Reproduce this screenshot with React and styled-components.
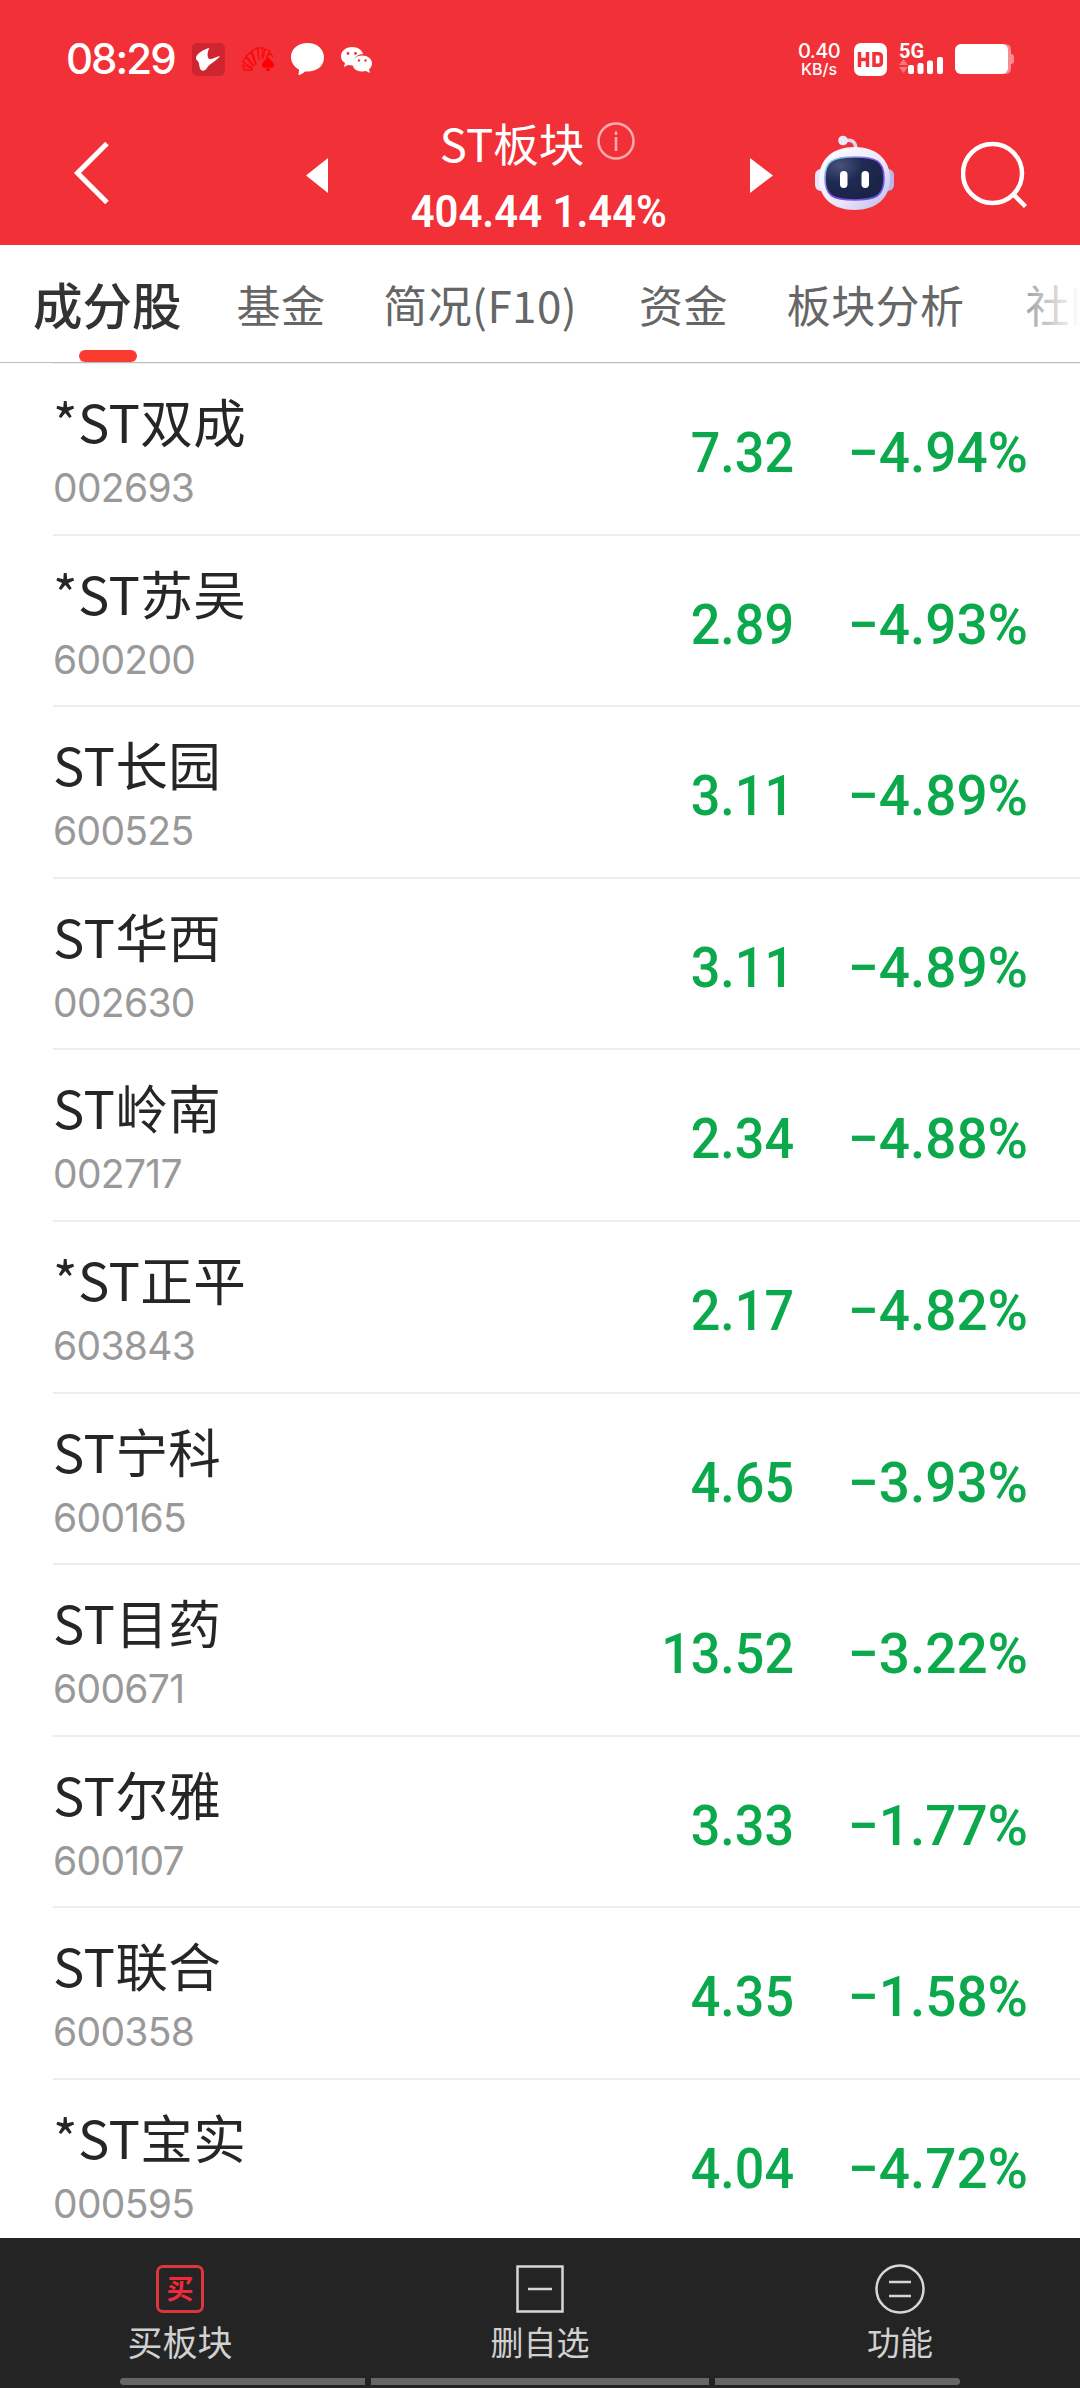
import React from 'react';
import styled, { createGlobalStyle } from 'styled-components';

const GlobalStyle = createGlobalStyle`
  * { box-sizing: border-box; }
  body {
    margin: 0;
    background-color: #fff;
    font-family: 'Noto Sans CJK SC', 'Noto Sans', sans-serif;
  }
  p { margin: 0; }
  svg { display: block; flex-shrink: 0; }
`
const Screen = styled.div`
  display: flex;
  flex-direction: column;
  width: 1080px;
  height: 2388px;
  overflow: hidden;
  background-color: #fff;
`
const Header = styled.header`
  height: 245px;
  color: #fff;
  background-color: #f23038;
`

/* status bar */
const StatusBar = styled.div`
  display: flex;
  align-items: center;
  justify-content: space-between;
  height: 118px;
  padding: 0 66px;
`
const StatusLeft = styled.div`
  display: flex;
  align-items: center;
`
const Clock = styled.span`
  width: 126px;
  font-family: Inter, sans-serif;
  font-size: 42px;
  font-weight: 450;
  line-height: 50px;
  letter-spacing: -2px;
`
const AppIcons = styled.div`
  display: flex;
  align-items: center;
  gap: 17px;
`
const StatusRight = styled.div`
  display: flex;
  align-items: center;
`
const Speed = styled.div`
  display: flex;
  flex-direction: column;
  align-items: center;
  width: 42px;
  margin-top: 2px;
  margin-right: 14px;
  font-family: Inter, sans-serif;
  font-weight: 500;
  font-size: 20px;
  line-height: 18px;
  letter-spacing: -0.6px;
  > small {
    font-size: 16px;
    letter-spacing: 0;
  }
`
const HdBadge = styled.div`
  display: flex;
  align-items: center;
  justify-content: center;
  width: 33px;
  height: 33px;
  margin-right: 12px;
  border-radius: 7px;
  background-color: #fff;
`
const Signal = styled.div`
  width: 45px;
  height: 32px;
  margin-right: 11px;
  font-family: Roboto, sans-serif;
  font-weight: 700;
  font-size: 20px;
  line-height: 16px;
  > svg { margin-top: -3px; }
`

/* title bar */
const TitleBar = styled.div`
  display: flex;
  height: 127px;
`
const BackButton = styled.div`
  width: 306px;
  padding: 23px 0 0 73px;
`
const Arrow = styled.div`
  width: ${({width}) => width}px;
  padding-top: 40px;
`
const TitleArea = styled.div`
  display: flex;
  flex-direction: column;
  align-items: center;
  width: 422px;
`
const Title = styled.div`
  display: flex;
  align-items: center;
  gap: 13px;
  height: 52px;
  margin: -2px 0 0 -3px;
  font-size: 45.5px;
  line-height: 54px;
  > svg { margin-top: -2px; }
`
const IndexValue = styled.div`
  margin-top: 19px;
  font-family: Roboto, sans-serif;
  font-weight: 600;
  font-size: 45px;
  line-height: 50px;
  white-space: pre;
  transform: scaleX(0.93);
`
const RobotButton = styled.div`
  width: 146px;
  padding-top: 17px;
`
const SearchButton = styled.div`
  padding-top: 23px;
`

/* tabs */
const Tabs = styled.nav`
  position: relative;
  display: flex;
  height: 118px;
  padding-left: 33px;
  overflow: hidden;
  border-bottom: 1px solid #bdbdbd;

  &::after {
    content: '';
    position: absolute;
    top: 0; right: 0; bottom: 0;
    width: 90px;
    background: linear-gradient(to right, rgba(255,255,255,0), #fff);
  }
`
const Tab = styled.div`
  display: flex;
  flex-direction: column;
  align-items: center;
  flex-shrink: 0;
  margin-right: ${({gap}) => gap}px;
  padding-top: ${({active}) => active ? 6 : 7}px;
  color: ${({active}) => active ? '#333' : '#666'};
  font-size: ${({active}) => active ? 49.5 : 44}px;
  font-weight: ${({active}) => active ? 500 : 400};
  line-height: 105px;
  letter-spacing: ${({active}) => active ? 0 : 0.4}px;
  white-space: nowrap;
`
const Indicator = styled.div`
  width: 58px;
  height: 12px;
  margin: -6px 0 0 2px;
  border-radius: 6px;
  background-color: #fb3b30;
`

/* stock list */
const List = styled.div`
  height: 1875px;
  padding-left: 53px;
  overflow: hidden;
`
const Rows = styled.div`
  border-top: 1px solid #ececec;
`
const Row = styled.div`
  display: flex;
  height: 171.6px;
  padding-right: 52px;
  border-bottom: 2px solid #ededed;
`
const Stock = styled.div`
  flex: 1;
  padding-top: 26px;
`
const Name = styled.p`
  color: #262626;
  font-size: 52.5px;
  line-height: 60px;
  letter-spacing: 0.4px;
`
const Code = styled.p`
  margin-top: 16px;
  color: #999;
  font-family: Inter, sans-serif;
  font-weight: 400;
  font-size: 39px;
  line-height: 44px;
  letter-spacing: -0.7px;
`
const Num = styled.div`
  width: ${({width}) => width}px;
  color: #0ca94c;
  font-family: Roboto, sans-serif;
  font-weight: 500;
  font-size: 56px;
  line-height: 178px;
  text-align: right;
  white-space: nowrap;
  transform: scaleX(${({stretch}) => stretch});
  transform-origin: right center;
`

/* bottom bar */
const BottomBar = styled.footer`
  height: 150px;
  padding-top: 26px;
  background-color: #242424;
`
const Actions = styled.div`
  display: grid;
  grid-template-columns: repeat(3, 1fr);
  height: 114px;
`
const Action = styled.div`
  display: flex;
  flex-direction: column;
  align-items: center;
  color: #d0d0d0;
  font-size: ${({size}) => size}px;
  line-height: 40px;
  > p { margin-top: 7px; }
`
const BuyIcon = styled.div`
  display: flex;
  align-items: center;
  justify-content: center;
  width: 48px;
  height: 48px;
  margin: 1px 0;
  border: 3px solid #dc363c;
  border-radius: 7px;
  color: #f02a3a;
  font-size: 27px;
  font-weight: 700;
  line-height: 27px;
  > span { margin-top: -3px; }
`
const ScrollBars = styled.div`
  display: grid;
  grid-template-columns: 245px 338px 245px;
  gap: 6px;
  justify-content: center;
`
const ScrollBar = styled.div`
  height: 7px;
  background-color: #666;
  &:first-child { border-radius: 4px 0 0 4px; }
  &:last-child { border-radius: 0 4px 4px 0; }
`

const stocks = [
  { name: '*ST双成', code: '002693', price: '7.32', rate: '−4.94%' },
  { name: '*ST苏吴', code: '600200', price: '2.89', rate: '−4.93%' },
  { name: 'ST长园', code: '600525', price: '3.11', rate: '−4.89%' },
  { name: 'ST华西', code: '002630', price: '3.11', rate: '−4.89%' },
  { name: 'ST岭南', code: '002717', price: '2.34', rate: '−4.88%' },
  { name: '*ST正平', code: '603843', price: '2.17', rate: '−4.82%' },
  { name: 'ST宁科', code: '600165', price: '4.65', rate: '−3.93%' },
  { name: 'ST目药', code: '600671', price: '13.52', rate: '−3.22%' },
  { name: 'ST尔雅', code: '600107', price: '3.33', rate: '−1.77%' },
  { name: 'ST联合', code: '600358', price: '4.35', rate: '−1.58%' },
  { name: '*ST宝实', code: '000595', price: '4.04', rate: '−4.72%' },
]

const tabs = [
  { label: '成分股', gap: 55 },
  { label: '基金', gap: 58 },
  { label: '简况(F10)', gap: 62 },
  { label: '资金', gap: 59 },
  { label: '板块分析', gap: 61 },
  { label: '社区', gap: 0 },
]

function BirdIcon() {
  return (
    <svg width="33" height="33" viewBox="0 0 33 33">
      <rect width="33" height="33" rx="5" fill="#cf2530" />
      <path d="M17.500 5C12 6 4 11 4 15c0 2 1.500 2.500 2.500 4 1 2 .5 5 2 7.500 2 2 4.500 1.500 6.500-1.500 2-4 10-7.500 13-12-4 1-8 3.500-10.500 3-2.500-1-2.500-7 0-11z" fill="#fff" />
    </svg>
  )
}

function CardsIcon() {
  return (
    <svg width="32" height="26" viewBox="0 0 32 26" fill="none" stroke="#ff0000" strokeWidth="1.3">
      <path d="M11 24H2l-1-5 10 4M10 22L1 16l3-5 8 10M12 20L4 10l5-4 5 13M14 18L10 5l5-3 2 12M17 14L16 2h5l-1 11M21 12l2-9 5 2-4 7M25 11l3-4 3 4" opacity="0.8" />
      <path d="M26 11c-2 3-6 5-6 8 0 3 3 4 5 2l-1 4h4l-1-4c2 2 5 1 5-2 0-3-4-5-6-8z" fill="#ff0000" stroke="none" />
    </svg>
  )
}

function ChatIcon() {
  return (
    <svg width="33" height="33" viewBox="0 0 33 33" fill="#fff">
      <path d="M16.500 0C7 0 0 6 0 14c0 5 3 10 8 12.500L7.500 32c2 0 5-2 6.500-3.500 11 1 19-5 19-14C33 6 26 0 16.500 0z" />
    </svg>
  )
}

function WechatIcon() {
  return (
    <svg width="32" height="27" viewBox="0 0 32 27">
      <path d="M11 1C5 1 0 5 0 10c0 3 1 5 4 7l-1 4 4-2 5 .5C12 12 16 8 22 8 21 4 17 1 11 1z" fill="#fff" />
      <path d="M21 9.500c-5 0-9.500 3-9.500 8s4 8 9.500 8l4-.5 4 2-1-3.500c2-2 3-4 3-6 0-5-4.500-8-10-8z" fill="#fff" />
      <circle cx="7" cy="7.500" r="1.400" fill="#f23038" />
      <circle cx="14.500" cy="7.500" r="1.400" fill="#f23038" />
      <circle cx="18" cy="14.500" r="1.200" fill="#f23038" />
      <circle cx="24.500" cy="14.500" r="1.200" fill="#f23038" />
    </svg>
  )
}

function HdIcon() {
  return (
    <svg width="27" height="17" viewBox="0 0 27 17" fill="none" stroke="#f23038" strokeWidth="3.5">
      <path d="M2.500 1v15M10.500 1v15M2.500 8.500h8" />
      <path d="M17 2.700h4.500q2.800 0 2.800 2.800v6q0 2.800-2.800 2.800H17z" />
    </svg>
  )
}

function SignalBars() {
  return (
    <svg width="45" height="19" viewBox="0 0 45 19">
      <path d="M0 9l4.500-6L9 9zM0 11h9l-4.500 6z" fill="#fff" opacity="0.35" />
      <rect x="9" y="9" width="6" height="9" rx="2" fill="#fff" />
      <rect x="18.500" y="7" width="6" height="11" rx="2" fill="#fff" />
      <rect x="28" y="4.500" width="6" height="13.500" rx="2" fill="#fff" />
      <rect x="38" y="1" width="6" height="17" rx="2" fill="#fff" />
    </svg>
  )
}

function BatteryIcon() {
  return (
    <svg width="59" height="30" viewBox="0 0 59 30">
      <path d="M46 0h4q6 0 6 6v4q3 0 3 3v4q0 3-3 3v4q0 6-6 6h-4z" fill="#fff" opacity="0.45" />
      <rect width="53" height="30" rx="6" fill="#fff" />
    </svg>
  )
}

function RobotIcon() {
  return (
    <svg width="80" height="76" viewBox="0 0 80 76">
      <defs>
        <linearGradient id="shell" x1="0" y1="0" x2="1" y2="1">
          <stop offset="0" stopColor="#fff" />
          <stop offset="0.6" stopColor="#e9e7fb" />
          <stop offset="1" stopColor="#b9b5ee" />
        </linearGradient>
        <linearGradient id="rim" x1="0" y1="0" x2="1" y2="1">
          <stop offset="0" stopColor="#7fe4ee" />
          <stop offset="0.5" stopColor="#8a4be0" />
          <stop offset="1" stopColor="#5a5ce8" />
        </linearGradient>
        <radialGradient id="face" cx="0.25" cy="0.2" r="0.8">
          <stop offset="0" stopColor="#47527c" />
          <stop offset="0.5" stopColor="#1f2a52" />
          <stop offset="1" stopColor="#1b2347" />
        </radialGradient>
      </defs>
      <path d="M29 6c7-2 11 0 12 7" fill="none" stroke="#dcd8f2" strokeWidth="3.500" />
      <circle cx="28" cy="5.500" r="4.800" fill="#ece9fa" />
      <rect x="0" y="34" width="14" height="22" rx="6" fill="#e6e3fa" />
      <rect x="65" y="34" width="14" height="22" rx="6" fill="#b9b5ee" />
      <path d="M39.500 12C18 12 4 24 4 44c0 19 14 31 35.500 31S75 63 75 44c0-20-14-32-35.500-32z" fill="url(#shell)" />
      <path d="M39.500 22c-22 0-29.500 4-29.500 21 0 18 8 22 29.500 22S69 61 69 43c0-17-8-21-29.500-21z" fill="url(#face)" stroke="url(#rim)" strokeWidth="1.600" />
      <rect x="25" y="36" width="7.500" height="17" rx="3.700" fill="#fff" />
      <rect x="46.500" y="36" width="7.500" height="17" rx="3.700" fill="#fff" />
    </svg>
  )
}

function App() {
  return (
    <Screen>
      <GlobalStyle />
      <Header>
        <StatusBar>
          <StatusLeft>
            <Clock>08:29</Clock>
            <AppIcons>
              <BirdIcon />
              <CardsIcon />
              <ChatIcon />
              <WechatIcon />
            </AppIcons>
          </StatusLeft>
          <StatusRight>
            <Speed>
              0.40
              <small>KB/s</small>
            </Speed>
            <HdBadge><HdIcon /></HdBadge>
            <Signal>
              5G
              <SignalBars />
            </Signal>
            <BatteryIcon />
          </StatusRight>
        </StatusBar>

        <TitleBar>
          <BackButton>
            <svg width="38" height="64" viewBox="0 0 38 64" fill="none" stroke="#fff" strokeWidth="5">
              <path d="M34 2.500L4.500 32 34 61.500" />
            </svg>
          </BackButton>
          <Arrow width={22}>
            <svg width="22" height="35" viewBox="0 0 22 35" fill="#fff"><path d="M22 0v35L0 17.500z" /></svg>
          </Arrow>
          <TitleArea>
            <Title>
              ST板块
              <svg width="38" height="38" viewBox="0 0 38 38" fill="none" stroke="#fff" strokeWidth="2.500" opacity="0.6">
                <circle cx="19" cy="19" r="17.500" />
                <path d="M19 15v14M19 9.500v3.500" />
              </svg>
            </Title>
            <IndexValue>404.44 1.44%</IndexValue>
          </TitleArea>
          <Arrow width={65}>
            <svg width="23" height="35" viewBox="0 0 23 35" fill="#fff"><path d="M0 0v35l23-17.500z" /></svg>
          </Arrow>
          <RobotButton><RobotIcon /></RobotButton>
          <SearchButton>
            <svg width="68" height="68" viewBox="0 0 68 68" fill="none" stroke="#fff" strokeWidth="4.500">
              <circle cx="31.500" cy="32.500" r="29.500" />
              <path d="M52 53l12.500 12.500" />
            </svg>
          </SearchButton>
        </TitleBar>
      </Header>

      <Tabs>
        {
          tabs.map((tab, index) => (
            <Tab key={tab.label} gap={tab.gap} active={index === 0 ? 1 : undefined}>
              {tab.label}
              {index === 0 && <Indicator />}
            </Tab>
          ))
        }
      </Tabs>

      <List>
        <Rows>
          {
            stocks.map((stock) => (
              <Row key={stock.code}>
                <Stock>
                  <Name>{stock.name}</Name>
                  <Code>{stock.code}</Code>
                </Stock>
                <Num width={200} stretch={0.93}>{stock.price}</Num>
                <Num width={234} stretch={0.98}>{stock.rate}</Num>
              </Row>
            ))
          }
        </Rows>
      </List>

      <BottomBar>
        <Actions>
          <Action size={35}>
            <BuyIcon><span>买</span></BuyIcon>
            <p>买板块</p>
          </Action>
          <Action size={33}>
            <svg width="50" height="50" viewBox="0 0 50 50" fill="none" stroke="#d6d6d6" strokeWidth="2.500">
              <path d="M2.500 2.500h45v45h-45zM13 25h24" />
            </svg>
            <p>删自选</p>
          </Action>
          <Action size={33}>
            <svg width="50" height="50" viewBox="0 0 50 50" fill="none" stroke="#d6d6d6" strokeWidth="2.500">
              <circle cx="25" cy="25" r="23.500" />
              <path d="M14 18h22M14 32h22" />
            </svg>
            <p>功能</p>
          </Action>
        </Actions>
        <ScrollBars>
          <ScrollBar />
          <ScrollBar />
          <ScrollBar />
        </ScrollBars>
      </BottomBar>
    </Screen>
  )
}

export default App;
